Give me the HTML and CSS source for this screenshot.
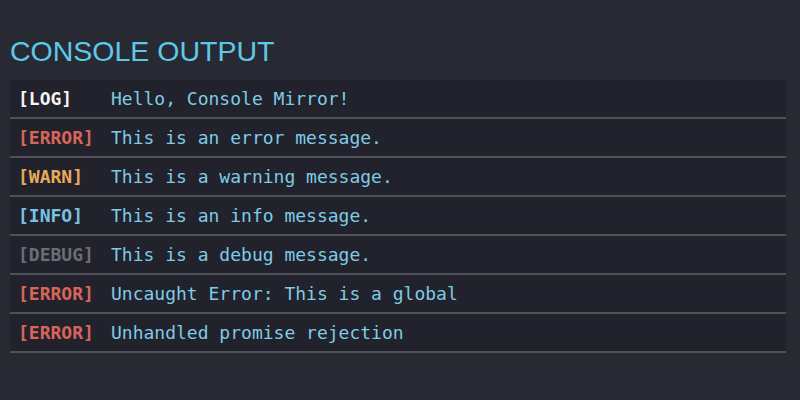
FILE: index.html
```html
<!DOCTYPE html>
<html>
<head>
<meta charset="utf-8">
<link rel="stylesheet" href="styles.css">
</head>
<body>
<h1 class="title">CONSOLE OUTPUT</h1>
<div class="console">
  <div class="row"><span class="label log">[LOG]</span><span class="msg">Hello, Console Mirror!</span></div>
  <div class="row"><span class="label error">[ERROR]</span><span class="msg">This is an error message.</span></div>
  <div class="row"><span class="label warn">[WARN]</span><span class="msg">This is a warning message.</span></div>
  <div class="row"><span class="label info">[INFO]</span><span class="msg">This is an info message.</span></div>
  <div class="row"><span class="label debug">[DEBUG]</span><span class="msg">This is a debug message.</span></div>
  <div class="row"><span class="label error">[ERROR]</span><span class="msg">Uncaught Error: This is a global</span></div>
  <div class="row"><span class="label error">[ERROR]</span><span class="msg">Unhandled promise rejection</span></div>
</div>
</body>
</html>
```
FILE: styles.css
```css
html, body {
  margin: 0;
  background: #282a33;
}
body {
  padding: 0 14px 0 10px;
}
.title {
  margin: 0;
  box-sizing: border-box;
  font-family: "Liberation Sans", Arial, sans-serif;
  font-weight: normal;
  font-size: 28.5px;
  line-height: 34px;
  color: #5fc8ea;
  padding-top: 34px;
  height: 80px;
}
.console {
  background: #21222b;
  font-family: "DejaVu Sans Mono", monospace;
  font-size: 18px;
}
.row {
  display: flex;
  padding: 8px 8px 7px;
  line-height: 22px;
  border-bottom: 2px solid #4f5058;
}
.label {
  flex: 0 0 93px;
  font-weight: bold;
}
.msg {
  color: #7fcbe6;
}
.log { color: #f4f4f4; }
.error { color: #d9655a; }
.warn { color: #e8a95c; }
.info { color: #7ac2e4; }
.debug { color: #6c6e76; }
```
